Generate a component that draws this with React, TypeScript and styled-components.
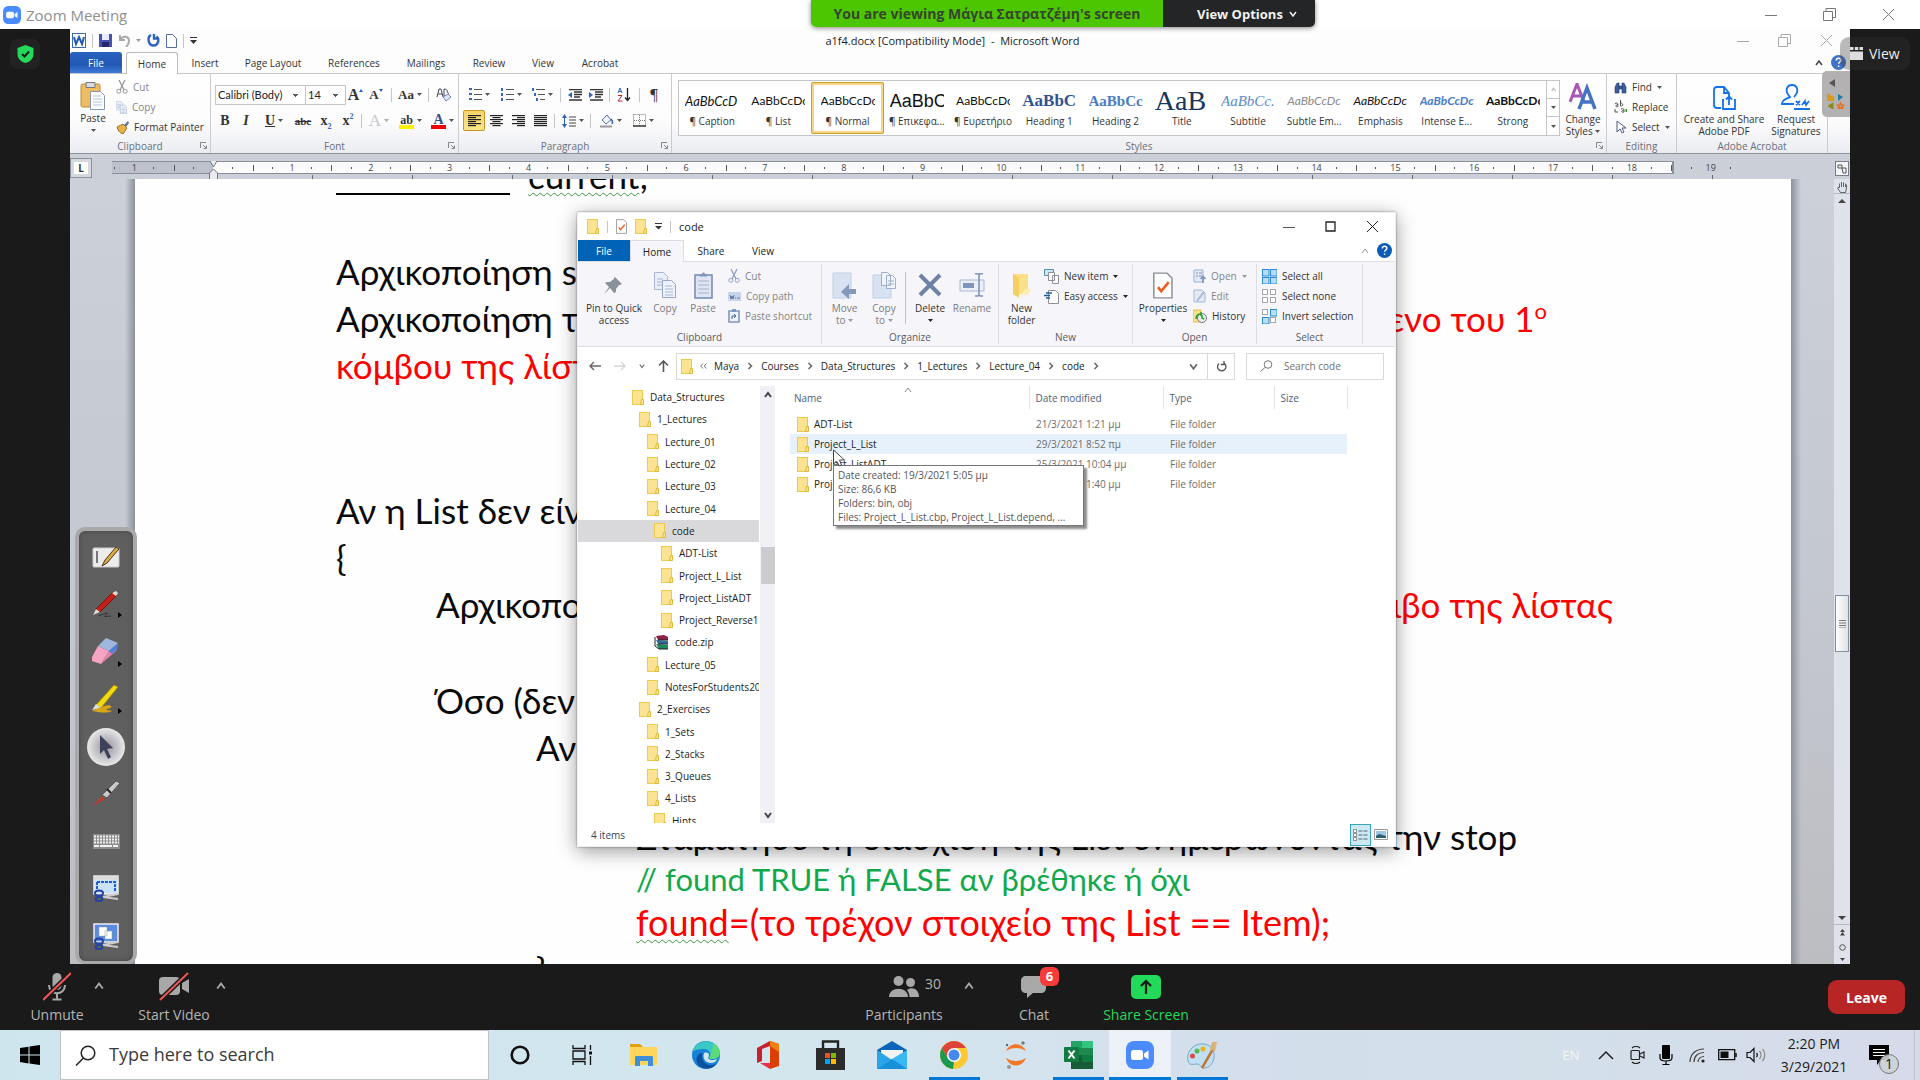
import React from "react";
import styled, { createGlobalStyle, css } from "styled-components";

const ui = `"Open Sans", "Noto Sans", sans-serif`;
const body = `Lato, "Open Sans", sans-serif`;
const serif = `"Liberation Serif", serif`;

const GlobalStyle = createGlobalStyle`
  * { box-sizing: border-box; }
  body { margin: 0; font-family: ${ui}; background: #1a1a1a; overflow: hidden; }
  button { border: 0; padding: 0; margin: 0; background: none; color: inherit; font: inherit; cursor: default; }
  svg { display: block; flex: none; }
`;

/* ---------- shell ---------- */
const Desktop = styled.div`
  height: 100vh;
  display: grid;
  grid-template-rows: 29px minmax(0, 1fr) 66px 50px;
  position: relative;
`;
const TitleBar = styled.header`
  background: #fff;
  display: flex;
  align-items: center;
  justify-content: space-between;
  padding: 0 25px 0 3px;
  color: #8f8f8f;
  font-size: 15px;
`;
const TitleName = styled.div`
  display: flex;
  align-items: center;
  gap: 5px;
`;
const WinButtons = styled.div<{ $gap: number }>`
  display: flex;
  align-items: center;
  gap: ${(p) => p.$gap}px;
`;
const ShareBanner = styled.div`
  position: absolute;
  z-index: 6;
  top: 0;
  left: 811px;
  display: flex;
  height: 27px;
  border-radius: 0 0 5px 5px;
  overflow: hidden;
  box-shadow: 0 1px 5px rgba(0, 0, 0, 0.5);
  font-weight: 700;
  font-size: 14px;
`;
const BannerText = styled.div`
  width: 352px;
  background: #4cc600;
  color: #35452f;
  display: flex;
  align-items: center;
  justify-content: center;
  white-space: nowrap;
`;
const BannerButton = styled.button`
  width: 152px;
  padding-left: 34px;
  background: #232527;
  color: #f2f2f2;
  display: flex;
  align-items: center;
  gap: 6px;
  font-size: 13px;
`;
const Stage = styled.main`
  display: grid;
  grid-template-columns: 70px minmax(0, 1fr) 70px;
  background: #1a1a1a;
  position: relative;
  min-height: 0;
`;
const Shield = styled.div`
  margin: 10px 0 0 10px;
  width: 30px;
  height: 30px;
  border-radius: 7px;
  background: #222;
  display: flex;
  align-items: center;
  justify-content: center;
`;
const ViewButton = styled.button`
  position: absolute;
  z-index: 3;
  right: 10px;
  top: 8px;
  height: 33px;
  width: 70px;
  border-radius: 9px;
  background: linear-gradient(90deg, rgba(60, 60, 60, 0.35) 10px, #222 10px);
  color: #eee;
  font-size: 14px;
  display: flex;
  align-items: center;
  gap: 6px;
  padding-left: 10px;
`;

/* ---------- word ---------- */
const Word = styled.section`
  background: #fdfdfe;
  display: flex;
  flex-direction: column;
  min-height: 0;
  font-size: 10px;
  color: #333;
`;
const WordTitle = styled.div`
  height: 23px;
  flex: none;
  display: grid;
  grid-template-columns: 1fr auto 1fr;
  align-items: center;
  padding: 0 17px 0 2px;
  color: #222;
  font-size: 11px;
`;
const QuickBar = styled.div<{ $gap?: number }>`
  display: flex;
  align-items: center;
  gap: ${(p) => p.$gap ?? 8}px;
`;
const RightSide = styled.div`
  display: flex;
  justify-content: flex-end;
`;
const VLine = styled.i<{ $h?: number; $m?: number }>`
  width: 1px;
  height: ${(p) => p.$h ?? 14}px;
  margin: 0 ${(p) => p.$m ?? 0}px;
  background: #c3c5c9;
  flex: none;
`;
const WordTabs = styled.nav`
  height: 22px;
  flex: none;
  display: flex;
  border-bottom: 1px solid #c6c8cc;
  padding-right: 4px;
`;
const WordTab = styled.button<{ $w: number; $kind?: "file" | "on" }>`
  width: ${(p) => p.$w}px;
  height: 22px;
  ${(p) =>
    p.$kind === "file" &&
    css`
      background: linear-gradient(#2a62c0, #2358b4 60%, #3f7ad8);
      color: #fff;
      border-radius: 3px 3px 0 0;
      margin-right: 4px;
      height: 21px;
    `}
  ${(p) =>
    p.$kind === "on" &&
    css`
      border: 1px solid #b9bbbf;
      border-bottom: 0;
      border-radius: 3px 3px 0 0;
      background: #fff;
    `}
`;
const TabsEnd = styled.div`
  margin-left: auto;
  display: flex;
  align-items: center;
  gap: 8px;
`;
const Ribbon = styled.div`
  height: 80px;
  flex: none;
  display: flex;
  padding-right: 22px;
  background: linear-gradient(#fff, #fcfcfd 60%, #ebecf0);
  border-bottom: 1px solid #8f939a;
`;
const Group = styled.div<{ $w?: number }>`
  ${(p) => (p.$w ? `width: ${p.$w}px; flex: none;` : "flex: 1; min-width: 0;")}
  border-right: 1px solid #c9cbd0;
  display: flex;
  flex-direction: column;
`;
const GroupBody = styled.div<{ $pad?: string }>`
  flex: 1;
  display: flex;
  padding: ${(p) => p.$pad ?? "0"};
  min-height: 0;
`;
const GroupLabel = styled.div`
  height: 15px;
  line-height: 14px;
  display: grid;
  grid-template-columns: 14px 1fr 14px;
  justify-items: center;
  align-items: center;
  color: #6a707c;
`;
const Rows = styled.div<{ $gap?: number; $pad?: string }>`
  display: flex;
  flex-direction: column;
  gap: ${(p) => p.$gap ?? 0}px;
  padding: ${(p) => p.$pad ?? "0"};
`;
const Row = styled.div`
  display: flex;
  align-items: center;
`;
const BigButton = styled.button<{ $w: number; $dim?: boolean; $top?: number }>`
  width: ${(p) => p.$w}px;
  flex: none;
  display: flex;
  flex-direction: column;
  align-items: center;
  padding-top: ${(p) => p.$top ?? 4}px;
  color: ${(p) => (p.$dim ? "#7c7c80" : "#333")};
  line-height: 12px;
  white-space: nowrap;
`;
const IconBox = styled.span<{ $h: number }>`
  height: ${(p) => p.$h}px;
  display: flex;
  align-items: center;
  justify-content: center;
`;
const SmallButton = styled.button<{ $dim?: boolean }>`
  height: 20px;
  display: flex;
  align-items: center;
  gap: 5px;
  white-space: nowrap;
  color: ${(p) => (p.$dim ? "#85858a" : "#333")};
`;
const Tool = styled.button<{ $w: number; $on?: boolean }>`
  width: ${(p) => p.$w}px;
  height: 21px;
  display: flex;
  align-items: center;
  justify-content: center;
  gap: 3px;
  ${(p) =>
    p.$on &&
    css`
      background: linear-gradient(#f7d36a, #fbe58d);
      border: 1px solid #c6961f;
      border-radius: 2px;
    `}
`;
const Glyph = styled.span<{ $s?: number; $b?: boolean; $i?: boolean; $u?: boolean; $strike?: boolean; $c?: string }>`
  font-family: ${serif};
  font-size: ${(p) => p.$s ?? 14}px;
  line-height: 16px;
  font-weight: ${(p) => (p.$b ? 700 : 400)};
  font-style: ${(p) => (p.$i ? "italic" : "normal")};
  text-decoration: ${(p) => (p.$u ? "underline" : p.$strike ? "line-through" : "none")};
  color: ${(p) => p.$c ?? "#333"};
  sub, sup { font-size: 8px; line-height: 0; color: #3666b8; }
`;
const Underbar = styled.span<{ $c: string }>`
  display: flex;
  justify-content: center;
  width: 15px;
  height: 17px;
  border-bottom: 4px solid ${(p) => p.$c};
`;
const Combo = styled.select<{ $w: number }>`
  width: ${(p) => p.$w}px;
  height: 20px;
  border: 1px solid #c4c6ca;
  margin-right: -1px;
  border-radius: 0;
  appearance: none;
  font: 11px ${body};
  color: #222;
  padding: 0 2px;
  background: linear-gradient(#555, #555) no-repeat right 7px top 8px / 5px 1px,
    linear-gradient(#555, #555) no-repeat right 8px top 9px / 3px 1px,
    linear-gradient(#555, #555) no-repeat right 9px top 10px / 1px 1px, #fff;
`;
const Gallery = styled.div`
  flex: 1;
  min-width: 0;
  display: flex;
  height: 56px;
  margin: 6px 0 0 6px;
  border: 1px solid #c3c5ca;
  background: #fff;
`;
const StyleCard = styled.button<{ $on?: boolean }>`
  flex: 1;
  min-width: 0;
  display: flex;
  flex-direction: column;
  align-items: center;
  padding-top: 8px;
  white-space: nowrap;
  ${(p) =>
    p.$on &&
    css`
      margin: 1px 0;
      padding-top: 4px;
      border: 3px solid #f6d684;
      outline: 1px solid #c9a227;
      outline-offset: -1px;
      border-radius: 2px;
    `}
`;
const Sample = styled.span<{ $s: number; $c?: string; $font?: string; $b?: boolean; $i?: boolean }>`
  width: 54px;
  height: 24px;
  line-height: 24px;
  overflow: hidden;
  text-align: left;
  font-family: ${(p) => p.$font ?? body};
  font-size: ${(p) => p.$s}px;
  color: ${(p) => p.$c ?? "#111"};
  font-weight: ${(p) => (p.$b ? 700 : 400)};
  font-style: ${(p) => (p.$i ? "italic" : "normal")};
`;
const CardName = styled.span`
  line-height: 16px;
`;
const GalleryScroll = styled.div`
  width: 13px;
  flex: none;
  border-left: 1px solid #c3c5ca;
  display: grid;
  grid-template-rows: 1fr 1fr 1fr;
  button { display: flex; align-items: center; justify-content: center; border-bottom: 1px solid #c3c5ca; }
  button:last-child { border: 0; }
`;
const RulerRow = styled.div`
  height: 25px;
  flex: none;
  display: flex;
  align-items: flex-start;
  background: #cbcfd7;
  padding-top: 4px;
`;
const TabStop = styled.button`
  width: 22px;
  height: 20px;
  border: 1px solid #8d929b;
  background: #fff;
  box-shadow: inset 0 0 0 3px #d5d8df;
  font-weight: 700;
  line-height: 16px;
`;
const Ruler = styled.div`
  flex: 1;
  height: 21px;
  margin: 3px 84px 0 3px;
  display: flex;
  background: repeating-linear-gradient(90deg, transparent 0 99px, #666c77 99px 100px) no-repeat 18px 14px / 1640px 4px,
    linear-gradient(90deg, transparent 1%, #bcc1cb 1% 7.1%, #fbfbfd 7.1% 95.3%, transparent 95.3%) no-repeat 0 1px / 100% 11px,
    linear-gradient(90deg, transparent 1%, #8a909b 1% 95.4%, transparent 95.4%) no-repeat 0 0 / 100% 13px;
`;
const Cm = styled.div<{ $first?: boolean }>`
  flex: 1;
  height: 13px;
  line-height: 13px;
  font-size: 9px;
  color: #444;
  text-align: center;
  background: linear-gradient(#555, #555) no-repeat 25% 6px / 1px 2px, linear-gradient(#555, #555) no-repeat 75% 6px / 1px 2px,
    linear-gradient(#555, #555) no-repeat 0 4px / ${(p) => (p.$first ? 0 : 1)}px 6px;
  display: flex;
  justify-content: center;
`;
const RulerEnd = styled.div`
  width: 16px;
  padding-top: 2px;
  display: flex;
  justify-content: center;
`;
const DocArea = styled.div`
  flex: 1;
  min-height: 0;
  display: flex;
`;
const Gutter = styled.div<{ $w: number; $right?: boolean }>`
  width: ${(p) => p.$w}px;
  flex: none;
  background: linear-gradient(${(p) => (p.$right ? "90deg" : "270deg")}, #8c919b 0, rgba(150, 155, 165, 0) 10px),
    linear-gradient(#cbd0d9, #c4c8d0 50%, #bcbdc1);
`;
const Page = styled.article`
  flex: 1;
  min-width: 0;
  background: #fefefe;
  overflow: hidden;
  padding-left: 201px;
  font-family: ${body};
  font-size: 35px;
  color: #0a0a0a;
`;
const Line = styled.p<{ $in?: number; $end?: number; $c?: string; $h?: number; $s?: number; $first?: boolean }>`
  margin: ${(p) => (p.$first ? "-27px" : "0")} 0 0 ${(p) => (p.$in ?? 0) * 100}px;
  height: ${(p) => p.$h ?? 47}px;
  line-height: 47px;
  font-size: ${(p) => p.$s ?? 35}px;
  ${(p) => p.$end && `width: ${p.$end}px;`}
  display: flex;
  justify-content: space-between;
  white-space: pre;
  color: ${(p) => p.$c ?? "inherit"};
  sup { font-size: 22px; line-height: 0; }
`;
const Red = styled.span`
  color: #fe0000;
`;
const Wavy = styled.span`
  text-decoration: underline wavy #3a9a3a 1px;
  text-underline-offset: 3px;
`;
const Blank = styled.span`
  display: inline-block;
  width: 174px;
  height: 20px;
  border-bottom: 2px solid #000;
  margin-right: 18px;
  vertical-align: -6px;
`;
const VScroll = styled.div`
  width: 16px;
  flex: none;
  background: #dfe2ea;
  display: flex;
  flex-direction: column;
  align-items: center;
  padding-top: 1px;
`;
const ScrollThumb = styled.div`
  width: 14px;
  height: 57px;
  margin-top: 387px;
  margin-bottom: auto;
  border: 1px solid #858e9c;
  background: linear-gradient(90deg, #fff, #dfe2e8);
  display: flex;
  align-items: center;
  justify-content: center;
`;
const ScrollItem = styled.button<{ $h: number; $line?: boolean }>`
  width: 16px;
  height: ${(p) => p.$h}px;
  display: flex;
  align-items: center;
  justify-content: center;
  ${(p) => p.$line && "border-bottom: 1px solid #b3b7bf;"}
`;
const SideTab = styled.div`
  position: absolute;
  z-index: 2;
  right: 70px;
  top: 42px;
  width: 28px;
  height: 46px;
  border-radius: 5px 0 0 5px;
  background: #b3b1b1;
  display: flex;
  align-items: center;
  justify-content: center;
`;
const PenBar = styled.div`
  position: absolute;
  z-index: 2;
  left: 75px;
  bottom: 0;
  width: 62px;
  height: 437px;
  padding: 7px 0 6px;
  border: 4px solid #a9a9ac;
  border-bottom-width: 3px;
  border-radius: 10px;
  background: #5f5f60;
  display: flex;
  flex-direction: column;
  align-items: center;
  justify-content: space-between;
  box-shadow: inset 0 0 5px #444;
`;
const PenTool = styled.button<{ $on?: boolean }>`
  width: 38px;
  height: 38px;
  border-radius: 50%;
  display: flex;
  align-items: center;
  justify-content: center;
  ${(p) => p.$on && "background: radial-gradient(#aaaab2 20%, #e8e8e8 70%);"}
`;

/* ---------- explorer ---------- */
const Explorer = styled.section`
  position: absolute;
  z-index: 4;
  left: 577px;
  top: 183px;
  width: 819px;
  height: 635px;
  background: #fff;
  border: 1px solid #f0f0f2;
  box-shadow: 0 4px 18px rgba(0, 0, 0, 0.4), 0 0 2px rgba(0, 0, 0, 0.4);
  display: flex;
  flex-direction: column;
  font-size: 10px;
  color: #222;
`;
const ExTitle = styled.div`
  height: 27px;
  flex: none;
  display: flex;
  align-items: center;
  justify-content: space-between;
  padding: 0 16px 0 9px;
  font-size: 11px;
`;
const ExTabs = styled.nav`
  height: 22px;
  flex: none;
  display: flex;
  border-bottom: 1px solid #dcdce2;
  padding-right: 3px;
`;
const ExTab = styled.button<{ $w: number; $kind?: "file" | "on" }>`
  width: ${(p) => p.$w}px;
  ${(p) => p.$kind === "file" && "background: #0063b5; color: #fff;"}
  ${(p) =>
    p.$kind === "on" &&
    "background: #f6f5fa; border: 1px solid #dcdce2; border-bottom: 0; height: 22px;"}
`;
const ExRibbon = styled.div`
  height: 85px;
  flex: none;
  display: flex;
  background: #f6f5fa;
  border-bottom: 1px solid #dcdce2;
  padding-top: 2px;
`;
const ExGroup = styled.div<{ $w: number }>`
  width: ${(p) => p.$w}px;
  display: flex;
  flex-direction: column;
  border-right: 1px solid #dddde4;
  margin-bottom: 2px;
`;
const ExLabel = styled.div`
  height: 13px;
  line-height: 12px;
  text-align: center;
  color: #5c5c60;
`;
const AddressRow = styled.div`
  display: flex;
  height: 38px;
  flex: none;
  align-items: center;
  padding: 0 11px 0 11px;
`;
const NavKeys = styled.div`
  width: 87px;
  display: flex;
  align-items: center;
  justify-content: space-between;
  padding-right: 7px;
`;
const Crumbs = styled.div`
  flex: 1;
  height: 27px;
  border: 1px solid #d9d9d9;
  display: flex;
  align-items: center;
  padding-left: 4px;
  gap: 7px;
`;
const CrumbEnd = styled.div`
  margin-left: auto;
  height: 25px;
  display: flex;
  button { width: 27px; display: flex; align-items: center; justify-content: center; }
  button + button { border-left: 1px solid #d9d9d9; }
`;
const SearchBox = styled.label`
  width: 138px;
  height: 27px;
  margin-left: 11px;
  border: 1px solid #d9d9d9;
  display: flex;
  align-items: center;
  padding-left: 13px;
  gap: 11px;
  input { width: 90px; border: 0; outline: 0; padding: 0; font: inherit; background: none; }
  input::placeholder { color: #6f6f6f; opacity: 1; }
`;
const Panes = styled.div`
  flex: 1;
  min-height: 0;
  display: flex;
  padding-top: 1px;
`;
const Tree = styled.div`
  width: 182px;
  overflow: hidden;
`;
const TreeList = styled.ul`
  list-style: none;
  margin: 0;
  padding: 0 1px 0 0;
  height: 446px;
  display: flex;
  flex-direction: column;
`;
const TreeItem = styled.li<{ $level: number; $on?: boolean }>`
  flex: 1;
  min-height: 0;
  display: flex;
  align-items: center;
  gap: 6px;
  padding-left: ${(p) => [54, 61, 69, 76, 83][p.$level]}px;
  white-space: nowrap;
  overflow: hidden;
  background: ${(p) => (p.$on ? "#d9d8da" : "none")};
`;
const TreeScroll = styled.div`
  width: 15px;
  background: #f1f0f4;
  display: flex;
  flex-direction: column;
  align-items: center;
  padding: 5px 0 4px;
`;
const TreeThumb = styled.div`
  width: 14px;
  height: 37px;
  background: #cccbce;
  margin: 148px 0 auto;
`;
const FilesPane = styled.div`
  flex: 1;
  padding-left: 15px;
  position: relative;
`;
const Files = styled.table`
  border-collapse: collapse;
  table-layout: fixed;
  width: 557px;
  th { height: 23px; padding: 0 0 0 6px; font-weight: 400; text-align: left; color: #4c607a; border-right: 1px solid #e3e3e6; }
  th:first-child { padding-left: 4px; }
  td { height: 20px; padding: 0 0 0 7px; color: #6d6d6d; white-space: nowrap; }
  td:first-child { color: #222; }
  thead::after { content: ""; display: block; height: 5px; }
`;
const FileRow = styled.tr<{ $on?: boolean }>`
  background: ${(p) => (p.$on ? "#e6f1fc" : "none")};
`;
const FileName = styled.span`
  display: flex;
  align-items: center;
  gap: 5px;
`;
const SortMark = styled.span`
  position: absolute;
  left: 129px;
  top: 0;
`;
const Tip = styled.div`
  position: absolute;
  left: 58px;
  top: 79px;
  width: 251px;
  height: 61px;
  border: 1px solid #76767a;
  background: #fff;
  box-shadow: 3px 3px 2px rgba(80, 80, 80, 0.65);
  padding: 2px 4px;
  line-height: 14px;
  color: #55555a;
  white-space: nowrap;
`;
const Pointer = styled.span`
  position: absolute;
  left: 58px;
  top: 63px;
`;
const Status = styled.footer`
  height: 23px;
  flex: none;
  display: flex;
  align-items: center;
  justify-content: space-between;
  padding: 0 7px 0 13px;
  color: #33475f;
`;
const ViewModes = styled.div`
  display: flex;
  align-items: center;
  gap: 3px;
  button:first-child { border: 1px solid #3aa5b8; background: #cce8f3; width: 21px; height: 22px; display: flex; align-items: center; justify-content: center; }
`;

/* ---------- zoom bar ---------- */
const ZoomBar = styled.div`
  background: #1a1a1a;
  display: grid;
  grid-template-columns: 1fr auto 1fr;
  color: #b4b4b4;
  font-size: 14px;
  padding-right: 15px;
`;
const BarGroup = styled.div<{ $pad?: number }>`
  display: flex;
  padding-left: ${(p) => p.$pad ?? 0}px;
`;
const BarButton = styled.button<{ $w: number; $c?: string }>`
  width: ${(p) => p.$w}px;
  display: flex;
  flex-direction: column;
  align-items: center;
  padding-top: 8px;
  color: ${(p) => p.$c ?? "inherit"};
  position: relative;
  white-space: nowrap;
`;
const BarIcon = styled.span`
  height: 29px;
  display: flex;
  align-items: center;
  margin-bottom: 4px;
`;
const Caret = styled.button<{ $w: number; $pad?: number }>`
  width: ${(p) => p.$w}px;
  padding-left: ${(p) => p.$pad ?? 0}px;
  height: 44px;
  display: flex;
  align-items: center;
`;
const Count = styled.span`
  position: absolute;
  left: 76px;
  top: 12px;
  line-height: 16px;
`;
const Badge = styled.span`
  position: absolute;
  left: 36px;
  top: 3px;
  width: 19px;
  height: 19px;
  border-radius: 6px;
  background: #fb3a3a;
  color: #fff;
  font-weight: 700;
  font-size: 13px;
  line-height: 19px;
`;
const Leave = styled.button`
  justify-self: end;
  margin-top: 16px;
  width: 77px;
  height: 34px;
  border-radius: 9px;
  background: #b82525;
  color: #fff;
  font-weight: 700;
  font-size: 14px;
`;

/* ---------- taskbar ---------- */
const Taskbar = styled.div`
  display: flex;
  align-items: stretch;
  background: linear-gradient(90deg, #cfe5ee, #d3e6ee 45%, #d4deec 65%, #d3e0ea 80%, #d6daea);
  color: #1c1c1c;
`;
const StartButton = styled.button`
  width: 60px;
  display: flex;
  align-items: center;
  justify-content: center;
`;
const TaskSearch = styled.label`
  width: 429px;
  background: #fff;
  border: 1px solid #bcc3c6;
  display: flex;
  align-items: center;
  gap: 13px;
  padding-left: 14px;
  input { flex: 1; border: 0; outline: 0; padding: 0 0 2px; font: 18px ${ui}; background: none; }
  input::placeholder { color: #3a3a3a; opacity: 1; }
`;
const TaskIcon = styled.button<{ $open?: boolean; $on?: boolean }>`
  width: 62px;
  display: flex;
  align-items: center;
  justify-content: center;
  background: ${(p) =>
    p.$on
      ? "linear-gradient(#0078d7, #0078d7) no-repeat bottom / 100% 3px, #ecf1f7"
      : p.$open
      ? "linear-gradient(#0078d7, #0078d7) no-repeat bottom / 51px 3px"
      : "none"};
`;
const Tray = styled.div`
  margin-left: auto;
  display: flex;
  align-items: center;
  padding-right: 5px;
`;
const TrayItem = styled.button<{ $w: number }>`
  width: ${(p) => p.$w}px;
  display: flex;
  justify-content: center;
`;
const Lang = styled.button`
  width: 38px;
  color: #f3f6ee;
  font-size: 13px;
`;
const Clock = styled.time`
  width: 84px;
  text-align: center;
  font-size: 14px;
  line-height: 23px;
`;
const Notice = styled.button`
  width: 46px;
  height: 50px;
  margin-right: 12px;
  position: relative;
  display: flex;
  align-items: center;
  justify-content: center;
`;
const NoticeCount = styled.span`
  position: absolute;
  left: 23px;
  top: 24px;
  width: 20px;
  height: 20px;
  border-radius: 50%;
  border: 1px solid #777;
  background: rgba(205, 210, 215, 0.9);
  font-size: 14px;
  line-height: 18px;
`;

/* ---------- icons ---------- */
type S = { w: number; h: number; vb?: string; children: React.ReactNode };
const Svg = ({ w, h, vb, children }: S) => (
  <svg width={w} height={h} viewBox={vb ?? `0 0 ${w} ${h}`} fill="none" aria-hidden="true">{children}</svg>
);
const Down = ({ c = "#555" }: { c?: string }) => <Svg w={5} h={3}><path d="M0 0h5L2.500 3z" fill={c} /></Svg>;
const Chev = ({ d = "down", c = "#666", s = 8, t = 1.5 }: { d?: "up" | "down" | "right"; c?: string; s?: number; t?: number }) => (
  <Svg w={s} h={s} vb="0 0 8 8">
    <path d={d === "up" ? "M1 6l3-4 3 4" : d === "down" ? "M1 2l3 4 3-4" : "M2.500 1l3 3-3 3"} stroke={c} strokeWidth={t} />
  </Svg>
);
const Min = ({ c }: { c: string }) => <Svg w={12} h={12}><path d="M0 6.500h12" stroke={c} /></Svg>;
const Restore = ({ c }: { c: string }) => <Svg w={13} h={13}><path d="M.5 3.500h9v9h-9zM3 3.500v-3h9.500v9h-3" stroke={c} /></Svg>;
const Close = ({ c }: { c: string }) => <Svg w={13} h={13}><path d="M1 1l11 11M12 1L1 12" stroke={c} /></Svg>;
const Folder = () => (
  <Svg w={12} h={15}>
    <rect x=".5" y=".5" width="10" height="14" fill="#fce392" stroke="#ecca4e" />
    <path d="M9.500 9.500h2v5h-3z" fill="#fbe693" stroke="#dcb93a" />
  </Svg>
);
const DocCheck = ({ s = 1 }: { s?: number }) => (
  <Svg w={11 * s} h={15 * s} vb="0 0 12 16">
    <path d="M.5.5h8l3 3v12H.500z" fill="#fff" stroke="#8a8f98" strokeWidth=".9" />
    <path d="M3 9l2 2.500L9.500 6" stroke="#e8601c" strokeWidth="1.600" />
  </Svg>
);
const Sheets = ({ s = 1 }: { s?: number }) => (
  <Svg w={22 * s} h={26 * s} vb="0 0 22 26">
    <path d="M.5.500h9l4 4v13h-13z" fill="#e9eef8" stroke="#a9b6cf" />
    <path d="M8.500 8.500h9l4 4v13h-13z" fill="#eef2fa" stroke="#97a6c4" />
    <path d="M3 7h6M3 10h5M3 13h5M11 14h7M11 17h8M11 20h8M11 23h8" stroke="#a9b6cf" />
  </Svg>
);
const Lines = ({ a }: { a: "l" | "c" | "r" | "j" }) => (
  <Svg w={13} h={12}>
    {[0, 1, 2, 3, 4, 5].map((i) => {
      const w = i % 2 && a !== "j" ? 8 : 13;
      const x = a === "r" ? 13 - w : a === "c" ? (13 - w) / 2 : 0;
      return <rect key={i} x={x} y={i * 2} width={w} height="1.200" fill="#222" />;
    })}
  </Svg>
);
const List = ({ n }: { n: number }) => (
  <Svg w={13} h={13}>
    {[1, 6, 11].map((y, i) => (
      <g key={y}>
        <rect x={n === 3 ? i * 2 : 0} y={y - 1} width={n === 1 ? 3 : 2} height={n === 1 ? 2 : 3} fill="#3666b8" />
        <path d={`M${n === 3 ? 4 + i * 2 : 5} ${y}.5H13`} stroke="#555" />
      </g>
    ))}
  </Svg>
);
const Indent = ({ out }: { out?: boolean }) => (
  <Svg w={15} h={12}>
    <path d="M2 .5h13M7 3h8M7 5.500h8M7 8h6M2 11h13" stroke="#333" strokeWidth="1.400" />
    <path d={out ? "M5 3L1 6l4 3zM5 6h2" : "M1 3l4 3-4 3z"} fill="#2e62bf" />
  </Svg>
);
const ZoomLogo = ({ s }: { s: number }) => (
  <Svg w={s} h={s} vb="0 0 28 28">
    <rect width="28" height="28" rx="8" fill="#4a8cff" />
    <rect x="5" y="9" width="12" height="10" rx="2.500" fill="#fff" />
    <path d="M18 12.500l4.500-3v9l-4.500-3z" fill="#fff" />
  </Svg>
);
const Help = ({ s, c = "#0a5cb8" }: { s: number; c?: string }) => (
  <Svg w={s} h={s} vb="0 0 15 15">
    <circle cx="7.500" cy="7.500" r="7.500" fill={c} />
    <path d="M5.300 5.500c0-3 4.500-2.800 4.500-.2 0 1.700-2.200 1.700-2.200 3.500M7.600 10.500v1.500" stroke="#fff" strokeWidth="1.500" />
  </Svg>
);
const Scissors = ({ c }: { c: string }) => (
  <Svg w={12} h={14}>
    <path d="M3 0l5 10M9 0L4 10" stroke={c} strokeWidth="1.300" />
    <circle cx="2.800" cy="11.300" r="2" stroke={c} /><circle cx="9.200" cy="11.300" r="2" stroke={c} />
  </Svg>
);
const Clip = () => (
  <Svg w={26} h={29}>
    <rect x="1" y="3" width="19" height="23" rx="1.500" fill="#eebd62" stroke="#b98c3d" />
    <path d="M6 1.500h9v5H6z" fill="#d7dbe0" stroke="#777" />
    <path d="M10.500 10.500h10l4 4v14h-14z" fill="#fff" stroke="#8796b4" />
    <path d="M13 15h8M13 18h9M13 21h9M13 24h9" stroke="#b5c2da" />
  </Svg>
);
const PasteEx = () => (
  <Svg w={19} h={27}>
    <rect x="1" y="3" width="17" height="23" fill="#dfe5f2" stroke="#7c8fb3" strokeWidth="1.600" />
    <path d="M6 4.500V2h2c0-2 3-2 3 0h2v2.500z" fill="#8796b4" />
    <path d="M4 9h11M4 13h11M4 17h11M4 21h11" stroke="#a5b3cf" />
  </Svg>
);
const Grid4 = ({ k }: { k: "all" | "none" | "inv" }) => (
  <Svg w={15} h={15}>
    {[[0, 0], [8, 0], [0, 8], [8, 8]].map(([x, y], i) => {
      const on = k === "all" || (k === "inv" && (i === 1 || i === 2));
      return <rect key={i} x={x + 0.5} y={y + 0.5} width={on ? 6.500 : 5} height={on ? 6.500 : 5} fill={on ? "#b9ddf6" : "#fff"} stroke={on ? "#2a8ad4" : "#a5a5aa"} />;
    })}
  </Svg>
);

/* ---------- data ---------- */
const wordTabs: [string, number][] = [
  ["Insert", 54], ["Page Layout", 82], ["References", 80], ["Mailings", 64], ["Review", 62], ["View", 46], ["Acrobat", 68],
];
const styleCards = [
  { n: "¶ Caption", t: "AaBbCcD", s: 13, i: true },
  { n: "¶ List", t: "AaBbCcDc", s: 12 },
  { n: "¶ Normal", t: "AaBbCcDc", s: 12, on: true },
  { n: "¶ Επικεφα...", t: "AaBbC", s: 18, f: `"Liberation Sans", sans-serif` },
  { n: "¶ Ευρετήριο", t: "AaBbCcDc", s: 12 },
  { n: "Heading 1", t: "AaBbCc", s: 17, f: serif, b: true, c: "#2f5496" },
  { n: "Heading 2", t: "AaBbCc", s: 15, f: serif, b: true, c: "#4a7cc4" },
  { n: "Title", t: "AaB", s: 28, f: serif, c: "#17365d" },
  { n: "Subtitle", t: "AaBbCc.", s: 15, f: serif, i: true, c: "#5b8cc9" },
  { n: "Subtle Em...", t: "AaBbCcDc", s: 12, i: true, c: "#8a8a8a" },
  { n: "Emphasis", t: "AaBbCcDc", s: 12, i: true },
  { n: "Intense E...", t: "AaBbCcDc", s: 12, i: true, b: true, c: "#4a7cc4" },
  { n: "Strong", t: "AaBbCcDc", s: 12, b: true },
];
const tree: [string, number][] = [
  ["Data_Structures", 0], ["1_Lectures", 1], ["Lecture_01", 2], ["Lecture_02", 2], ["Lecture_03", 2], ["Lecture_04", 2],
  ["code", 3], ["ADT-List", 4], ["Project_L_List", 4], ["Project_ListADT", 4], ["Project_Reverse1", 4], ["code.zip", 3],
  ["Lecture_05", 2], ["NotesForStudents20", 2], ["2_Exercises", 1], ["1_Sets", 2], ["2_Stacks", 2], ["3_Queues", 2],
  ["4_Lists", 2], ["Hints", 3],
];
const files = [
  ["ADT-List", "21/3/2021 1:21 μμ"],
  ["Project_L_List", "29/3/2021 8:52 πμ"],
  ["Project_ListADT", "25/3/2021 10:04 μμ"],
  ["Project_Reverse1", "25/3/2021 1:40 μμ"],
];
const crumbs = ["Maya", "Courses", "Data_Structures", "1_Lectures", "Lecture_04", "code"];

const Launcher = () => (
  <button aria-label="More options"><Svg w={7} h={7}><path d="M.5 6V.500H6M3 3l3.500 3.500M6.500 3.500v3h-3" stroke="#888" /></Svg></button>
);
const Label = ({ children, more }: { children: string; more?: boolean }) => (
  <GroupLabel><span /><span>{children}</span>{more ? <Launcher /> : <span />}</GroupLabel>
);

function WordRibbon() {
  return (
    <Ribbon>
      <Group $w={141}>
        <GroupBody>
          <BigButton $w={46}>
            <IconBox $h={34}><Clip /></IconBox>Paste<IconBox $h={12}><Down /></IconBox>
          </BigButton>
          <Rows $pad="3px 0 0 0">
            <SmallButton $dim><Scissors c="#999" />Cut</SmallButton>
            <SmallButton $dim><Sheets s={0.5} />Copy</SmallButton>
            <SmallButton>
              <Svg w={13} h={13}><path d="M8 4l4-4 1 2-3 4z" fill="#6472a0" /><path d="M1 6l6-3 4 4-4 6c-3-1-5-3-6-7z" fill="#e5b44c" stroke="#9c7426" /></Svg>
              Format Painter
            </SmallButton>
          </Rows>
        </GroupBody>
        <Label more>Clipboard</Label>
      </Group>
      <Group $w={248}>
        <GroupBody $pad="10px 0 0 4px">
          <Rows $gap={5}>
            <Row>
              <Combo $w={91} aria-label="Font"><option>Calibri (Body)</option></Combo>
              <Combo $w={41} aria-label="Font size"><option>14</option></Combo>
              <Tool $w={21}>
                <Row><Glyph $b $s={16}>A</Glyph><Svg w={4} h={12}><path d="M0 3h4L2 0z" fill="#2e62bf" /></Svg></Row>
              </Tool>
              <Tool $w={20}>
                <Row><Glyph $b $s={13}>A</Glyph><Svg w={4} h={12}><path d="M0 0h4L2 3z" fill="#2e62bf" /></Svg></Row>
              </Tool>
              <VLine $m={5} />
              <Tool $w={26}><Glyph $b $s={13}>Aa</Glyph><Down /></Tool>
              <VLine $m={5} />
              <Tool $w={18}>
                <Svg w={15} h={15}><path d="M1 10l2-8h2l2 8M2 7h4M8 2v7h2c3-1 3-3 1-4 1-2-1-3-3-3z" stroke="#445" /><path d="M7 10l5-3 3 3-5 4z" fill="#dfe6f5" stroke="#7488b5" /></Svg>
              </Tool>
            </Row>
            <Row>
              <Tool $w={20}><Glyph $b>B</Glyph></Tool>
              <Tool $w={22}><Glyph $b $i>I</Glyph></Tool>
              <Tool $w={34}><Glyph $b $u>U</Glyph><Down /></Tool>
              <Tool $w={24}><Glyph $b $s={11} $strike>abc</Glyph></Tool>
              <Tool $w={22}><Glyph $b>x<sub>2</sub></Glyph></Tool>
              <Tool $w={22}><Glyph $b>x<sup>2</sup></Glyph></Tool>
              <VLine $m={2} />
              <Tool $w={30}><Glyph $s={17} $c="#c6c6cc">A</Glyph><Down c="#aaa" /></Tool>
              <Tool $w={33}><Underbar $c="#ffee00"><Glyph $b $s={12}>ab</Glyph></Underbar><Down /></Tool>
              <Tool $w={31}><Underbar $c="#f00000"><Glyph $b $s={14} $c="#33508c">A</Glyph></Underbar><Down /></Tool>
            </Row>
          </Rows>
        </GroupBody>
        <Label more>Font</Label>
      </Group>
      <Group $w={213}>
        <GroupBody $pad="10px 0 0 4px">
          <Rows $gap={5}>
            <Row>
              <Tool $w={32}><List n={1} /><Down /></Tool>
              <Tool $w={32}><List n={2} /><Down /></Tool>
              <Tool $w={30}><List n={3} /><Down /></Tool>
              <VLine $m={3} />
              <Tool $w={21}><Indent out /></Tool>
              <Tool $w={21}><Indent /></Tool>
              <VLine $m={3} />
              <Tool $w={22}>
                <Svg w={14} h={15}><path d="M1 6l2-5 2 5M2 4.500h2" stroke="#3666b8" /><path d="M1 8.500h4L1 14h4.500" stroke="#b03030" /><path d="M10.500 1v12M8 10.500l2.500 3 2.500-3" stroke="#222" strokeWidth="1.300" /></Svg>
              </Tool>
              <VLine $m={4} />
              <Tool $w={20}><Glyph $s={17}>¶</Glyph></Tool>
            </Row>
            <Row>
              <Tool $w={22} $on><Lines a="l" /></Tool>
              <Tool $w={22}><Lines a="c" /></Tool>
              <Tool $w={22}><Lines a="r" /></Tool>
              <Tool $w={22}><Lines a="j" /></Tool>
              <VLine $m={3} />
              <Tool $w={30}>
                <Svg w={14} h={14}><path d="M2.500 0L5 4H0zM2.500 14L5 10H0z" fill="#2e62bf" /><path d="M2.500 3v8" stroke="#2e62bf" /><path d="M7 3h7M7 6h7M7 9h7M7 12h7" stroke="#444" /></Svg>
                <Down />
              </Tool>
              <VLine $m={2} />
              <Tool $w={34}>
                <Svg w={15} h={15}><path d="M3 7l5-5 4 5-5 4z" fill="#f2f4f9" stroke="#5470a8" /><path d="M12 6c2 2 2 3 1 5" stroke="#2e62bf" strokeWidth="1.500" /><path d="M1 13.500h12" stroke="#999" strokeWidth="2" /></Svg>
                <Down />
              </Tool>
              <Tool $w={32}>
                <Svg w={13} h={13}><path d="M.5.500h12v11M.500.500v12M6.500 1v11M1 6.500h11" stroke="#777" strokeDasharray="1 1" /><path d="M0 12h13" stroke="#333" strokeWidth="1.500" /></Svg>
                <Down />
              </Tool>
            </Row>
          </Rows>
        </GroupBody>
        <Label more>Paragraph</Label>
      </Group>
      <Group>
        <GroupBody>
          <Gallery>
            {styleCards.map((c) => (
              <StyleCard key={c.n} $on={c.on}>
                <Sample $s={c.s} $c={c.c} $font={c.f} $b={c.b} $i={c.i}>{c.t}</Sample>
                <CardName>{c.n}</CardName>
              </StyleCard>
            ))}
            <GalleryScroll>
              <button aria-label="Previous styles"><Chev d="up" c="#bbb" s={5} t={2} /></button>
              <button aria-label="Next styles"><Down /></button>
              <button aria-label="All styles"><Down /></button>
            </GalleryScroll>
          </Gallery>
          <BigButton $w={46} $top={6}>
            <IconBox $h={33}>
              <Svg w={28} h={27}>
                <path d="M1 19L8 1l7 18M4 13h8" stroke="#a955b8" strokeWidth="3" />
                <path d="M10 26L18 5l8 21M13 19h10" stroke="#4472c4" strokeWidth="3.500" />
              </Svg>
            </IconBox>
            <span>Change</span>
            <Row>Styles&nbsp;<Down /></Row>
          </BigButton>
        </GroupBody>
        <Label more>Styles</Label>
      </Group>
      <Group $w={70}>
        <GroupBody $pad="3px 0 0 7px">
          <Rows>
            <SmallButton>
              <Svg w={13} h={13}><path d="M1 12V6l2-4h2v10zM8 12V2h2l2 4v6zM5 5h3v3H5z" fill="#3e5f9e" stroke="#233d72" strokeWidth=".6" /></Svg>Find <Down />
            </SmallButton>
            <SmallButton>
              <Svg w={13} h={14}><path d="M1 3.500c3-1 3 0 3 3-3 1-3-1.500 0-2M6.500 0v6c3 1 3-3 0-3M4 12H1V9m6 0c3-1 3 0 3 3-3 1-3-1.500 0-2" stroke="#555" /><path d="M12.500 9v3" stroke="#2a9a2a" strokeWidth="2" /></Svg>Replace
            </SmallButton>
            <SmallButton>
              <Svg w={13} h={14}><path d="M3 1v11l3-3 2 4 2-1-2-4h4z" fill="#fff" stroke="#4a5b85" /></Svg>Select <Down />
            </SmallButton>
          </Rows>
        </GroupBody>
        <Label>Editing</Label>
      </Group>
      <Group $w={151}>
        <GroupBody>
          <BigButton $w={94} $top={9}>
            <IconBox $h={30}>
              <Svg w={23} h={25}><path d="M8 22H4c-2 0-3-1-3-3V4c0-2 1-3 3-3h7l5 6v3M11 1v6h5M11 14h-1v9h12v-9h-1M16 19V11M13 13.500l3-3 3 3" stroke="#1473e6" strokeWidth="1.800" /></Svg>
            </IconBox>
            <span>Create and Share</span><span>Adobe PDF</span>
          </BigButton>
          <BigButton $w={50} $top={7}>
            <IconBox $h={32}>
              <Svg w={30} h={27}><path d="M13 20H1c0-5 5-5 8-7-6-6-3-12 2-12s8 6 2 12M13 25h16M15 17l4 4M19 17l-4 4M21 21l3-4 1 4 3-4" stroke="#1473e6" strokeWidth="1.800" /></Svg>
            </IconBox>
            <span>Request</span><span>Signatures</span>
          </BigButton>
        </GroupBody>
        <Label>Adobe Acrobat</Label>
      </Group>
    </Ribbon>
  );
}

function WordWindow() {
  return (
    <Word>
      <WordTitle>
        <QuickBar $gap={6}>
          <Svg w={14} h={15}><rect x=".5" y=".5" width="13" height="14" fill="#fff" stroke="#3a6bb5" /><path d="M2 4l2 7 3-7 3 7 2-7" stroke="#2358b4" strokeWidth="2" /></Svg>
          <VLine />
          <Svg w={13} h={13}><path d="M0 0h13v13H0z" fill="#4752b0" /><path d="M3 0h7v6H3z" fill="#e9ecfa" /><path d="M3 8h7v5H3z" fill="#222b66" /></Svg>
          <Svg w={12} h={12}><path d="M2 0v5h5M2 5c3-5 9-4 9 1 0 3-2 5-3 6" stroke="#a9a9ad" strokeWidth="2" /></Svg>
          <Down c="#999" />
          <Svg w={13} h={13}><path d="M4 1C0 3 1 11 6 11.500s7-6 3.500-9M7 0v4.500h5" stroke="#2e62bf" strokeWidth="2.400" /></Svg>
          <Svg w={11} h={14}><path d="M.5.500h6l4 4v9H.500z" fill="#fff" stroke="#556f9f" /></Svg>
          <VLine />
          <Svg w={7} h={7}><path d="M0 .5h7" stroke="#333" /><path d="M0 3h7L3.500 7z" fill="#333" /></Svg>
        </QuickBar>
        <span>a1f4.docx [Compatibility Mode]&nbsp; -&nbsp; Microsoft Word</span>
        <RightSide>
          <WinButtons $gap={29}><Min c="#aaa" /><Restore c="#aaa" /><Close c="#aaa" /></WinButtons>
        </RightSide>
      </WordTitle>
      <WordTabs>
        <WordTab $w={52} $kind="file">File</WordTab>
        <WordTab $w={52} $kind="on">Home</WordTab>
        {wordTabs.map(([t, w]) => <WordTab key={t} $w={w}>{t}</WordTab>)}
        <TabsEnd><Chev d="up" c="#444" /><Help s={15} c="#3f74c8" /></TabsEnd>
      </WordTabs>
      <WordRibbon />
      <RulerRow>
        <TabStop>L</TabStop>
        <Ruler>
          {Array.from({ length: 21 }, (_, i) => (
            <Cm key={i} $first={i === 0}>
              {i === 1 ? (
                <Svg w={9} h={21}><path d="M.5-3h8v2l-4 7-4-7zM4.500 8l4 4v8h-8v-8z" fill="#e9ebf0" stroke="#777" /></Svg>
              ) : Math.abs(i - 1)}
            </Cm>
          ))}
        </Ruler>
        <RulerEnd>
          <Svg w={14} h={17}><rect x=".5" y="1.500" width="13" height="14" fill="#f3f4f8" stroke="#777d88" /><path d="M3 5h4v3H3zM7 8h4v5H8z" stroke="#555" /></Svg>
        </RulerEnd>
      </RulerRow>
      <DocArea>
        <Gutter $w={65} />
        <Page>
          <Line $first><span><Blank /><Wavy>current</Wavy>;</span></Line>
          <Line $h={49} />
          <Line>Αρχικοποίηση s</Line>
          <Line $end={1211}><span>Αρχικοποίηση τ</span><Red>μενο του 1<sup>ο</sup></Red></Line>
          <Line $c="#fe0000">κόμβου της λίστ</Line>
          <Line $h={49} />
          <Line $h={49} />
          <Line>Αν η List δεν είν</Line>
          <Line>{"{"}</Line>
          <Line $in={1} $end={1177}><span>Αρχικοπο</span><Red>μβο της λίστας</Red></Line>
          <Line $h={49} />
          <Line $in={1}>Όσο (δεν</Line>
          <Line $in={2}>Αν</Line>
          <Line $h={42} />
          <Line $in={3} $h={43}>Σταμάτησε τη διάσχιση της List ενημερώνοντας την stop</Line>
          <Line $in={3} $h={43} $s={31} $c="#12a84c">// found TRUE ή FALSE αν βρέθηκε ή όχι</Line>
          <Line $in={3} $s={36} $c="#fe0000"><span><Wavy>found</Wavy>=(το τρέχον στοιχείο της List == Item);</span></Line>
          <Line $in={2}>{"}"}</Line>
        </Page>
        <Gutter $w={43} $right />
        <VScroll>
          <ScrollItem $h={14} $line aria-label="Pan">
            <Svg w={10} h={12}><path d="M2 6l-1.500 1 3 4.500h5L9.500 7V3.500M2.500 7V2.500M4.500 6V1M6.500 6V1.500M8.500 6V2.500" stroke="#666" /></Svg>
          </ScrollItem>
          <ScrollItem $h={14} aria-label="Scroll up"><Svg w={8} h={4}><path d="M0 4h8L4 0z" fill="#444" /></Svg></ScrollItem>
          <ScrollThumb><Svg w={7} h={8}><path d="M0 .5h7M0 3h7M0 5.500h7M0 8h7" stroke="#777" /></Svg></ScrollThumb>
          <ScrollItem $h={14} $line aria-label="Scroll down"><Svg w={8} h={4}><path d="M0 0h8L4 4z" fill="#444" /></Svg></ScrollItem>
          <ScrollItem $h={14} aria-label="Previous page"><Svg w={5} h={7}><path d="M0 3h5L2.500 0zM0 6.500h5L2.500 3z" fill="#444" /></Svg></ScrollItem>
          <ScrollItem $h={16} aria-label="Browse object"><Svg w={7} h={7}><circle cx="3.500" cy="3.500" r="2.800" stroke="#555" /></Svg></ScrollItem>
          <ScrollItem $h={9} aria-label="Next page"><Svg w={5} h={4}><path d="M0 0h5L2.500 3z" fill="#444" /></Svg></ScrollItem>
        </VScroll>
      </DocArea>
    </Word>
  );
}

function PenTools() {
  return (
    <PenBar>
      <PenTool aria-label="Whiteboard"><Svg w={28} h={22}><rect x="1" y="2" width="26" height="19" rx="1" fill="#ececec" stroke="#ccc" /><path d="M4 5h2v12H4z" fill="#777" /><path d="M10 20l3-6L24 1l3 2-12 14z" fill="#d9a942" stroke="#4a3a1a" /></Svg></PenTool>
      <PenTool aria-label="Pen"><Svg w={32} h={28}><path d="M4 24l3-6L23 2l4 3L11 21z" fill="#c22018" stroke="#7c120e" /><path d="M22 3l4-2 2 2-2 3zM3 25l3-6 4 3z" fill="#ddd" /><path d="M8 26c8-3 12-4 8-1s2 1 5 1" stroke="#333" /><path d="M28 22l4 3-4 3z" fill="#000" /></Svg></PenTool>
      <PenTool aria-label="Eraser"><Svg w={32} h={30}><path d="M2 20L8 9l11 5-8 13-9-3z" fill="#f6a3c4" /><path d="M8 9l8-8 12 5-9 8z" fill="#9db8dc" /><path d="M19 14l9-8-2 8-15 13z" fill="#e583ae" /><path d="M19 14l9-8-1 6-5 5z" fill="#4f7fd8" /><path d="M28 24l4 3-4 3z" fill="#000" /></Svg></PenTool>
      <PenTool aria-label="Highlighter"><Svg w={32} h={30}><path d="M6 21L24 1l4 2-17 21z" fill="#f2da12" stroke="#a58c00" /><path d="M2 26l4-6 5 4z" fill="#ddd" /><path d="M2 27c10-4 16-7 19-5s-7 3-4 4 4 0 5 1c-6 3-14 1-20 0z" fill="#d9a514" /><path d="M28 24l4 3-4 3z" fill="#000" /></Svg></PenTool>
      <PenTool $on aria-label="Pointer"><Svg w={16} h={24}><path d="M2 0v19l4-4 4 9 3-2-4-8 6-1z" fill="#3f4059" /></Svg></PenTool>
      <PenTool aria-label="Laser"><Svg w={28} h={28}><path d="M1 26l9-10 3 3z" fill="#c03a30" /><path d="M10 15L24 1l4 2-13 15z" fill="#c9c9c9" stroke="#555" /><path d="M15 9l4 4" stroke="#222" strokeWidth="2" /></Svg></PenTool>
      <PenTool aria-label="Keyboard"><Svg w={27} h={15}><path d="M0 0h27v15H0z" fill="#8c8c8e" /><path d="M1 2.500h25M1 5.500h25M1 8.500h25" stroke="#f2f2f2" strokeWidth="2" strokeDasharray="2 1" /><path d="M1 12h25" stroke="#f2f2f2" strokeWidth="2" strokeDasharray="5 1 12 1" /></Svg></PenTool>
      <PenTool aria-label="Capture area"><Svg w={26} h={27}><path d="M1 1h24v18H1z" fill="#c9e2f8" stroke="#eee" strokeWidth="1.500" /><path d="M1 1h24v4H1z" fill="#ddd" /><path d="M4 7h18v10M4 7v9" stroke="#1d5bd8" strokeWidth="2" strokeDasharray="3 1" /><path d="M10 22l15-3M10 22l15 2" stroke="#ccc" strokeWidth="2" /><ellipse cx="6" cy="18" rx="4" ry="2.500" stroke="#2344a0" strokeWidth="2" /><ellipse cx="6" cy="24" rx="3.500" ry="2" stroke="#2344a0" strokeWidth="2" /></Svg></PenTool>
      <PenTool aria-label="Capture window"><Svg w={26} h={27}><path d="M1 1h24v18H1z" fill="#5a8be0" stroke="#eee" strokeWidth="1.500" /><path d="M6 4h8v9H6zM12 8h7v8h-7z" fill="#fff" stroke="#999" strokeWidth=".5" /><path d="M10 22l15-3M10 22l15 2" stroke="#ccc" strokeWidth="2" /><ellipse cx="6" cy="18" rx="4" ry="2.500" stroke="#2344a0" strokeWidth="2" /><ellipse cx="6" cy="24" rx="3.500" ry="2" stroke="#2344a0" strokeWidth="2" /></Svg></PenTool>
    </PenBar>
  );
}

function ExplorerWindow() {
  return (
    <Explorer>
      <ExTitle>
        <QuickBar>
          <Folder /><VLine $h={12} /><DocCheck /><Folder />
          <Svg w={7} h={7}><path d="M0 .5h7" stroke="#333" /><path d="M0 3h7L3.500 6.500z" fill="#333" /></Svg>
          <VLine $h={12} />code
        </QuickBar>
        <WinButtons $gap={30}>
          <Min c="#555" />
          <Svg w={11} h={11}><path d="M1 1h9v9H1z" stroke="#222" strokeWidth="1.300" /></Svg>
          <Close c="#222" />
        </WinButtons>
      </ExTitle>
      <ExTabs>
        <ExTab $w={52} $kind="file">File</ExTab>
        <ExTab $w={54} $kind="on">Home</ExTab>
        <ExTab $w={54}>Share</ExTab>
        <ExTab $w={50}>View</ExTab>
        <TabsEnd><Chev d="up" c="#999" t={1} /><Help s={15} /></TabsEnd>
      </ExTabs>
      <ExRibbon>
        <ExGroup $w={244}>
          <GroupBody>
            <BigButton $w={72}>
              <IconBox $h={34}><Svg w={20} h={20}><path d="M11 2l7 7-2 1-1 0-3 4v3l-2 1-4-5-6 6 5-7-4-4 2-1h3l4-3 0-1z" fill="#8a9299" /></Svg></IconBox>
              <span>Pin to Quick</span><span>access</span>
            </BigButton>
            <BigButton $w={30} $dim><IconBox $h={34}><Sheets /></IconBox>Copy</BigButton>
            <BigButton $w={46} $dim><IconBox $h={34}><PasteEx /></IconBox>Paste</BigButton>
            <Rows $pad="2px 0 0 2px">
              <SmallButton $dim><Scissors c="#8ea2c4" />Cut</SmallButton>
              <SmallButton $dim><Svg w={13} h={9}><path d="M0 0h13v9H0z" fill="#c9d5ea" /><path d="M2 3l1 4 1-3 1 3 1-4M7 6h1M9 6h3" stroke="#4b6290" strokeWidth=".8" /></Svg>Copy path</SmallButton>
              <SmallButton $dim><Svg w={12} h={14}><path d="M1 2h10v11H1z" fill="#eef2fa" stroke="#8296bd" strokeWidth="1.600" /><path d="M4 0h4v3H4z" fill="#8296bd" /><path d="M4 10V7h4M6 5l2 2-2 2" stroke="#44618f" /></Svg>Paste shortcut</SmallButton>
            </Rows>
          </GroupBody>
          <ExLabel>Clipboard</ExLabel>
        </ExGroup>
        <ExGroup $w={177}>
          <GroupBody>
            <BigButton $w={45} $dim>
              <IconBox $h={34}><Svg w={25} h={27}><path d="M1 1h18v25H1z" fill="#d9e2f2" stroke="#c3cfe5" /><path d="M24 17h-7v-5l-8 8 8 7v-5h7z" fill="#8598b8" /></Svg></IconBox>
              <span>Move</span><Row>to&nbsp;<Down c="#999" /></Row>
            </BigButton>
            <BigButton $w={34} $dim>
              <IconBox $h={34}><Svg w={25} h={27}><path d="M1 3h18v23H1z" fill="#d9e2f2" stroke="#c3cfe5" /><path d="M9.500.500h6l3 3v10h-9zM14.500 3.500h6l3 3v10h-9z" fill="#f1f4fb" stroke="#9fafcc" /><path d="M16 9h6M16 12h6" stroke="#9fafcc" /></Svg></IconBox>
              <span>Copy</span><Row>to&nbsp;<Down c="#999" /></Row>
            </BigButton>
            <Row><VLine $h={52} $m={4} /></Row>
            <BigButton $w={40}>
              <IconBox $h={34}><Svg w={24} h={24}><path d="M2 2l20 20M22 2L2 22" stroke="#6f82a4" strokeWidth="4" /></Svg></IconBox>
              Delete<IconBox $h={12}><Down c="#222" /></IconBox>
            </BigButton>
            <BigButton $w={44} $dim>
              <IconBox $h={34}><Svg w={26} h={24}><path d="M1 7h24v11H1z" fill="#eaeff8" stroke="#a9b7d2" /><path d="M4 10h11v5H4z" fill="#7f95bd" /><path d="M20 1v22M16 .8h3l1 1 1-1h3M16 23h3l1-1 1 1h3" stroke="#8294b6" strokeWidth="1.600" /></Svg></IconBox>
              Rename
            </BigButton>
          </GroupBody>
          <ExLabel>Organize</ExLabel>
        </ExGroup>
        <ExGroup $w={134}>
          <GroupBody>
            <BigButton $w={45}>
              <IconBox $h={34}><Svg w={18} h={26}><path d="M0 2h15v20H0z" fill="#fbe08a" /><path d="M0 2l6 4v20l-6-4z" fill="#f6cf62" /><path d="M12 17h6l-3 6H8z" fill="#fdecb4" /></Svg></IconBox>
              <span>New</span><span>folder</span>
            </BigButton>
            <Rows $pad="2px 0 0 0">
              <SmallButton><Svg w={15} h={15}><path d="M.5.500h9v6h-9z" fill="#cfe6f2" stroke="#5b8ca8" /><path d="M4.500 3.500h6v8h-6zM8.500 6.500h6v8h-6z" fill="#fff" stroke="#8c9096" /></Svg>New item <Down c="#222" /></SmallButton>
              <SmallButton><Svg w={15} h={15}><path d="M4.500 1.500h7l3 3v10h-10z" fill="#fff" stroke="#8c9096" /><path d="M2 4h6M0 6.500h6M2 9h4" stroke="#1f5fa0" strokeWidth="1.300" /></Svg>Easy access <Down c="#222" /></SmallButton>
            </Rows>
          </GroupBody>
          <ExLabel>New</ExLabel>
        </ExGroup>
        <ExGroup $w={124}>
          <GroupBody>
            <BigButton $w={60}>
              <IconBox $h={34}><DocCheck s={1.8} /></IconBox>Properties<IconBox $h={12}><Down c="#222" /></IconBox>
            </BigButton>
            <Rows $pad="2px 0 0 0">
              <SmallButton $dim><Svg w={13} h={14}><path d="M1 1h9v12H1z" fill="#e4eaf5" stroke="#9eafcf" /><path d="M3 4h2M6 4h3M3 7h2M6 7h3" stroke="#7c90b8" /><path d="M10 14V8M7.500 10L10 7.500l2.500 2.500" stroke="#7f95bd" strokeWidth="1.600" /></Svg>Open <Down c="#999" /></SmallButton>
              <SmallButton $dim><Svg w={13} h={14}><path d="M1 1h8l3 3v9H1z" fill="#e4eaf5" stroke="#a9b7d2" /><path d="M4 12l7-9" stroke="#a9b7d2" strokeWidth="2" /></Svg>Edit</SmallButton>
              <SmallButton><Svg w={14} h={14}><path d="M0 1h8v12H0z" fill="#fbe08a" stroke="#e5c148" /><circle cx="9" cy="9" r="4.500" fill="#e9eef2" stroke="#6e7a80" /><path d="M3 10c0-3 2-5 5-5M8 3v4M9 6v3l2 1" stroke="#2aa02a" strokeWidth="1.500" /></Svg>History</SmallButton>
            </Rows>
          </GroupBody>
          <ExLabel>Open</ExLabel>
        </ExGroup>
        <ExGroup $w={106}>
          <GroupBody>
            <Rows $pad="2px 0 0 5px">
              <SmallButton><Grid4 k="all" />Select all</SmallButton>
              <SmallButton><Grid4 k="none" />Select none</SmallButton>
              <SmallButton><Grid4 k="inv" />Invert selection</SmallButton>
            </Rows>
          </GroupBody>
          <ExLabel>Select</ExLabel>
        </ExGroup>
      </ExRibbon>
      <AddressRow>
        <NavKeys>
          <Svg w={12} h={10}><path d="M12 5H1M5 1L1 5l4 4" stroke="#666" strokeWidth="1.400" /></Svg>
          <Svg w={12} h={10}><path d="M0 5h11M7 1l4 4-4 4" stroke="#d5d5d8" strokeWidth="1.400" /></Svg>
          <Chev s={6} />
          <Svg w={11} h={12}><path d="M5.500 12V1M1 5.500L5.500 1 10 5.500" stroke="#555" strokeWidth="1.600" /></Svg>
        </NavKeys>
        <Crumbs>
          <Folder />
          <Svg w={7} h={6}><path d="M3 .5L.7 3 3 5.500M6.500.500L4.200 3l2.300 2.500" stroke="#777" /></Svg>
          {crumbs.map((c) => (
            <React.Fragment key={c}><button>{c}</button><Chev d="right" /></React.Fragment>
          ))}
          <CrumbEnd>
            <button aria-label="Previous locations"><Chev s={9} /></button>
            <button aria-label="Refresh"><Svg w={11} h={11}><path d="M8.500 2.500A4.200 4.200 0 1 1 3 2.500M8 0v3.500H4.800" stroke="#555" strokeWidth="1.300" /></Svg></button>
          </CrumbEnd>
        </Crumbs>
        <SearchBox>
          <Svg w={13} h={12}><circle cx="8" cy="4.500" r="3.800" stroke="#777" /><path d="M5 7.500L.5 11.500" stroke="#777" /></Svg>
          <input type="text" placeholder="Search code" aria-label="Search code" />
        </SearchBox>
      </AddressRow>
      <Panes>
        <Tree>
          <TreeList>
            {tree.map(([t, l]) => (
              <TreeItem key={t} $level={l} $on={t === "code"}>
                {t === "code.zip" ? (
                  <Svg w={15} h={15}><path d="M2 1l8-1 4 2v3H4z" fill="#8e2147" /><path d="M2 5l12 1v3H4z" fill="#2f6f9c" /><path d="M2 9l12 1v4H5z" fill="#1f8a5b" /><path d="M4 5h10M4 9h10M5 14h9M1 2v9l4 3" stroke="#222" /></Svg>
                ) : <Folder />}
                {t}
              </TreeItem>
            ))}
          </TreeList>
        </Tree>
        <TreeScroll><Chev d="up" c="#444" t={2} /><TreeThumb /><Chev c="#444" t={2} /></TreeScroll>
        <FilesPane>
          <Files>
            <colgroup><col width="239" /><col width="134" /><col width="111" /><col width="73" /></colgroup>
            <thead><tr><th>Name</th><th>Date modified</th><th>Type</th><th>Size</th></tr></thead>
            <tbody>
              {files.map(([n, d], i) => (
                <FileRow key={n} $on={i === 1}>
                  <td><FileName><Folder />{n}</FileName></td><td>{d}</td><td>File folder</td><td />
                </FileRow>
              ))}
            </tbody>
          </Files>
          <SortMark><Chev d="up" c="#888" t={1} /></SortMark>
          <Tip role="tooltip">
            <div>Date created: 19/3/2021 5:05 μμ</div>
            <div>Size: 86,6 KB</div>
            <div>Folders: bin, obj</div>
            <div>Files: Project_L_List.cbp, Project_L_List.depend, ...</div>
          </Tip>
          <Pointer><Svg w={13} h={18}><path d="M.5 1v14l3-3 3 5 2-1-2-5h5z" fill="#fff" stroke="#444" /></Svg></Pointer>
        </FilesPane>
      </Panes>
      <Status>
        4 items
        <ViewModes>
          <button aria-label="Details view"><Svg w={15} h={12}><path d="M.5.500h3v3h-3zM.500 4.500h3v3h-3zM.500 8.500h3v3h-3z" fill="#fff" stroke="#777" strokeWidth=".8" /><path d="M5.500 2H15M5.500 6H15M5.500 10H15" stroke="#567" strokeDasharray="4 1" /></Svg></button>
          <button aria-label="Thumbnail view"><Svg w={14} h={11}><path d="M.5.500h13v10H.500z" fill="#fff" stroke="#999" /><path d="M2 2h10v7H2z" fill="#9cc8e8" /><path d="M2 7l3-2 7 2v2H2z" fill="#2e5f70" /></Svg></button>
        </ViewModes>
      </Status>
    </Explorer>
  );
}

export default function App() {
  return (
    <Desktop>
      <GlobalStyle />
      <TitleBar>
        <TitleName><ZoomLogo s={18} />Zoom Meeting</TitleName>
        <WinButtons $gap={46}>
          <Min c="#777" /><Restore c="#777" /><Close c="#777" />
        </WinButtons>
      </TitleBar>
      <ShareBanner>
        <BannerText>You are viewing Μάγια Σατρατζέμη's screen</BannerText>
        <BannerButton>View Options <Chev c="#eee" /></BannerButton>
      </ShareBanner>
      <Stage>
        <Shield>
          <Svg w={17} h={18}><path d="M8.500 0l8 3v6c0 5-4 8-8 9-4-1-8-4-8-9V3z" fill="#23d959" /><path d="M5 9l2.500 2.500L12 6.500" stroke="#1a1a1a" strokeWidth="2" /></Svg>
        </Shield>
        <WordWindow />
        <SideTab>
          <Svg w={20} h={30}><path d="M9 0v8L3 4z" fill="#555" /><path d="M1 15h3l1 2h3v5H1z" fill="#d99a1e" /><path d="M12 15l5 3-5 4z" fill="#1c7fa8" /><path d="M7 24v6l-5-3z" fill="#8a8a20" stroke="#8a8a20" /><path d="M14.500 24l1 2 2 .3-1.500 1.500.5 2-2-1-2 1 .5-2-1.500-1.500 2-.3z" stroke="#e87018" strokeWidth="1.500" /></Svg>
        </SideTab>
        <ViewButton>
          <Svg w={13} h={13}><path d="M0 0h3.500v3H0zM4.800 0h3.500v3H4.800zM9.500 0H13v3H9.500zM0 4.500h13V13H0z" fill="#ddd" /></Svg>View
        </ViewButton>
        <PenTools />
        <ExplorerWindow />
      </Stage>
      <ZoomBar>
        <BarGroup $pad={20}>
          <BarButton $w={74}>
            <BarIcon><Svg w={28} h={29}><rect x="9.500" y="1" width="9" height="17" rx="4.500" fill="#a8a8a8" /><path d="M6 13c0 11 16 11 16 0M14 21v6M9.500 27.500h9" stroke="#a8a8a8" strokeWidth="2" /><path d="M0 28L28 1" stroke="#1a1a1a" strokeWidth="5" /><path d="M0 28L28 1" stroke="#f15656" strokeWidth="2" /></Svg></BarIcon>
            Unmute
          </BarButton>
          <Caret $w={38} aria-label="Audio options"><Chev d="up" c="#aaa" s={10} /></Caret>
          <BarButton $w={84}>
            <BarIcon><Svg w={32} h={29}><rect x="1" y="5" width="21" height="18" rx="4" fill="#a8a8a8" /><path d="M24 11l7-4v14l-7-4z" fill="#a8a8a8" /><path d="M2 28L30 1" stroke="#1a1a1a" strokeWidth="5" /><path d="M2 28L30 1" stroke="#f15656" strokeWidth="2" /></Svg></BarIcon>
            Start Video
          </BarButton>
          <Caret $w={12} aria-label="Video options"><Chev d="up" c="#aaa" s={10} /></Caret>
        </BarGroup>
        <BarGroup $pad={172}>
          <BarButton $w={110}>
            <BarIcon><Svg w={30} h={23}><circle cx="9.500" cy="6" r="5" fill="#a8a8a8" /><circle cx="21.500" cy="7.500" r="4.500" fill="#a8a8a8" /><path d="M0 22c0-11 19-11 19 0zM20.500 22c0-3-1-5-2.500-7 5-4 12-1 12 7z" fill="#a8a8a8" /></Svg></BarIcon>
            Participants<Count>30</Count>
          </BarButton>
          <Caret $w={45} $pad={5} aria-label="Participant options"><Chev d="up" c="#aaa" s={10} /></Caret>
          <BarButton $w={60}>
            <BarIcon><Svg w={26} h={24}><path d="M5 1h15c3 0 5 2 5 5v7c0 3-2 5-5 5h-8l-6 5v-5H5c-3 0-5-2-5-5V6c0-3 2-5 5-5z" fill="#a8a8a8" /></Svg></BarIcon>
            Chat<Badge>6</Badge>
          </BarButton>
          <BarButton $w={164} $c="#23d959">
            <BarIcon><Svg w={30} h={24}><rect width="30" height="24" rx="5" fill="#23d959" /><path d="M15 19V6M10 11l5-5 5 5" stroke="#1a1a1a" strokeWidth="2.200" /></Svg></BarIcon>
            Share Screen
          </BarButton>
        </BarGroup>
        <Leave>Leave</Leave>
      </ZoomBar>
      <Taskbar>
        <StartButton aria-label="Start"><Svg w={20} h={20}><path d="M0 3l8.500-1.300V9.500H0zM9.500 1.500L20 0v9.500H9.500zM0 10.500h8.500v8L0 17zM9.500 10.500H20V20L9.500 18.500z" fill="#000" /></Svg></StartButton>
        <TaskSearch>
          <Svg w={21} h={21}><circle cx="13" cy="8" r="6.800" stroke="#222" strokeWidth="1.500" /><path d="M8.500 13L1 20.500" stroke="#222" strokeWidth="1.500" /></Svg>
          <input type="text" placeholder="Type here to search" aria-label="Type here to search" />
        </TaskSearch>
        <TaskIcon aria-label="Cortana"><Svg w={20} h={20}><circle cx="10" cy="10" r="8.300" stroke="#111" strokeWidth="2.600" /></Svg></TaskIcon>
        <TaskIcon aria-label="Task view"><Svg w={21} h={20}><path d="M1 0v3.500h12V0M1 20v-3.500h12V20M1 6h12v8H1zM18.500 0v5M18.500 11v9" stroke="#111" strokeWidth="1.300" /><path d="M17 6.500h3v3h-3z" fill="#111" /></Svg></TaskIcon>
        <TaskIcon aria-label="File Explorer"><Svg w={28} h={24}><path d="M0 1h10l3 3h-13z" fill="#e0a010" /><path d="M0 4h27v18H0z" fill="#ffd65c" /><path d="M5 23v-8c0-2 1-2 2-2h14c1 0 2 0 2 2v8h-5v-5h-8v5z" fill="#3f8fd8" /></Svg></TaskIcon>
        <TaskIcon aria-label="Edge"><Svg w={30} h={30}>
          <circle cx="15" cy="15" r="14" fill="#1583d8" /><path d="M1.500 12C4 2 15-1 22 3c6 3 8 9 6 13-2 3-7 4-10 2 3-4 0-9-5-9S3 10 1.500 12z" fill="#3ac8c4" /><path d="M22 3c6 3 8 9 6 13-2 3-7 4-10 2 3-4 4-10 4-15z" fill="#5bdc7a" />
          <path d="M12 13c-3 5 1 12 8 12 3 0 5-1 6-2-5 8-16 7-20 0-2-5 1-10 6-10z" fill="#0c4f9e" /><path d="M13 13c5-2 6 3 4 5 2 3 7 2 9 1-1 3-4 4-6 4-5 0-9-4-7-10z" fill="#d3e6ee" />
        </Svg></TaskIcon>
        <TaskIcon aria-label="Office"><Svg w={24} h={28}><path d="M1 7L14 0v5L6 8v12l-5 2z" fill="#c8202c" /><path d="M14 0l9 3v22l-9 3z" fill="#dc3e08" /><path d="M4 22h10v6z" fill="#e8304c" /><path d="M14 0l9 3v8l-9-6z" fill="#f08010" /></Svg></TaskIcon>
        <TaskIcon aria-label="Store"><Svg w={29} h={30}><path d="M7 9V1.500h15V9" stroke="#222" strokeWidth="2.400" /><path d="M0 8h29v22H0z" fill="#2b2b2b" /><path d="M9 13h5v5H9z" fill="#f25022" /><path d="M15 13h5v5h-5z" fill="#7fba00" /><path d="M9 19h5v5H9z" fill="#00a4ef" /><path d="M15 19h5v5h-5z" fill="#ffb900" /></Svg></TaskIcon>
        <TaskIcon aria-label="Mail"><Svg w={30} h={28}><path d="M0 9l15-9 15 9v4H0z" fill="#0a64b8" /><path d="M4 9h22v9H4z" fill="#f3f3f3" /><path d="M0 9l15 10L0 28z" fill="#2aa5e8" /><path d="M30 9L15 18 0 28h30z" fill="#38b8f2" /><path d="M0 28l15-10 15 10z" fill="#1a90da" /></Svg></TaskIcon>
        <TaskIcon $open aria-label="Chrome"><Svg w={28} h={28}><circle cx="14" cy="14" r="14" fill="#fcc934" /><path d="M1.900 7a14 14 0 0 1 24.200 0H14L8 17.500z" fill="#dd4438" /><path d="M1.900 7L8 17.500 14 21l-1 7A14 14 0 0 1 1.900 7z" fill="#1a9a50" /><circle cx="14" cy="14" r="7" fill="#fff" /><circle cx="14" cy="14" r="5.500" fill="#4488f0" /></Svg></TaskIcon>
        <TaskIcon aria-label="Jupyter"><Svg w={24} h={28}><path d="M2 10c4-9 16-9 20 0-6-4-14-4-20 0zM2 17c4 10 16 10 20 0-6 4-14 4-20 0z" fill="#f07828" /><circle cx="19" cy="2" r="1.700" fill="#777" /><circle cx="3" cy="4" r="1.200" fill="#666" /><circle cx="5" cy="26" r="2" fill="#999" /></Svg></TaskIcon>
        <TaskIcon $open aria-label="Excel"><Svg w={29} h={28}><path d="M7 0h22v28H7z" fill="#1f8a50" /><path d="M18 0h11v7H18z" fill="#33c481" /><path d="M7 0h11v7H7z" fill="#21a366" /><path d="M7 14h22v14H7z" fill="#185c37" /><path d="M18 14h11v7H18z" fill="#107c41" /><rect y="6" width="15" height="15" rx="1" fill="#107c41" /><path d="M4.500 9.500l6 8M10.500 9.500l-6 8" stroke="#fff" strokeWidth="2" /></Svg></TaskIcon>
        <TaskIcon $on aria-label="Zoom"><ZoomLogo s={28} /></TaskIcon>
        <TaskIcon $open aria-label="Paint"><Svg w={30} h={28}><path d="M13 3C5 4-1 12 1 20c1 5 6 3 9 3 4 0 3 5 8 4 7-1 10-9 9-15S20 2 13 3z" fill="#bfe0f2" stroke="#7ba8c4" /><circle cx="5.500" cy="15" r="2.500" fill="#e04848" /><circle cx="10" cy="10" r="2.500" fill="#58b848" /><circle cx="16" cy="8" r="2.500" fill="#f0b020" /><path d="M15 27L26 8" stroke="#c07838" strokeWidth="2.500" /><path d="M23 9l2-8 5 0-2 9z" fill="#d9b078" /></Svg></TaskIcon>
        <Tray>
          <Lang>EN</Lang>
          <TrayItem $w={32} aria-label="Hidden icons"><Svg w={16} h={10}><path d="M1 9l7-7 7 7" stroke="#222" strokeWidth="1.500" /></Svg></TrayItem>
          <TrayItem $w={30} aria-label="Meet now"><Svg w={15} h={18}><rect x="1" y="4.500" width="8.500" height="9" rx="1" stroke="#222" strokeWidth="1.200" /><path d="M10 8l4-2v6l-4-2M2 2c2-2 6-2 8 0M2 16c2 2 6 2 8 0" stroke="#222" strokeWidth="1.200" /></Svg></TrayItem>
          <TrayItem $w={28} aria-label="Microphone"><Svg w={14} h={20}><rect x="3" width="8" height="14" rx="1" fill="#000" /><path d="M1 9v4c0 4 12 4 12 0V9M7 16v3M3.500 19.500h7" stroke="#000" strokeWidth="1.200" /></Svg></TrayItem>
          <TrayItem $w={34} aria-label="Network"><Svg w={16} h={15}><path d="M1 14C1 6 7 1 15 1M5 14c0-6 4-9.500 10-9.500M9 14c0-3 2.500-5.500 6-5.500" stroke="#444" strokeWidth="1.200" /><circle cx="14" cy="13" r="1.600" fill="#222" /></Svg></TrayItem>
          <TrayItem $w={26} aria-label="Battery"><Svg w={19} h={12}><path d="M.7.700h16v10H.700z" stroke="#111" strokeWidth="1.300" /><path d="M2.500 2.500h8v6.500h-8z" fill="#111" /><path d="M18 4v4" stroke="#111" strokeWidth="1.500" /></Svg></TrayItem>
          <TrayItem $w={32} aria-label="Volume"><Svg w={21} h={16}><path d="M1 5.500h3l4-4v13l-4-4H1z" stroke="#111" strokeWidth="1.200" /><path d="M10.500 6c1 1 1 3 0 4" stroke="#111" strokeWidth="1.300" /><path d="M13.500 4c2 2 2 6 0 8M16.500 2c3 3 3 9 0 12" stroke="#888" strokeWidth="1.200" /></Svg></TrayItem>
          <Clock>2:20 PM<br />3/29/2021</Clock>
          <Notice aria-label="Notifications">
            <Svg w={20} h={20}><path d="M0 0h20v15h-8l-4 5v-5H0z" fill="#000" /><path d="M4 4.500h12M4 7.500h12M4 10.500h12" stroke="#fff" /></Svg>
            <NoticeCount>1</NoticeCount>
          </Notice>
          <VLine $h={50} />
        </Tray>
      </Taskbar>
    </Desktop>
  );
}
